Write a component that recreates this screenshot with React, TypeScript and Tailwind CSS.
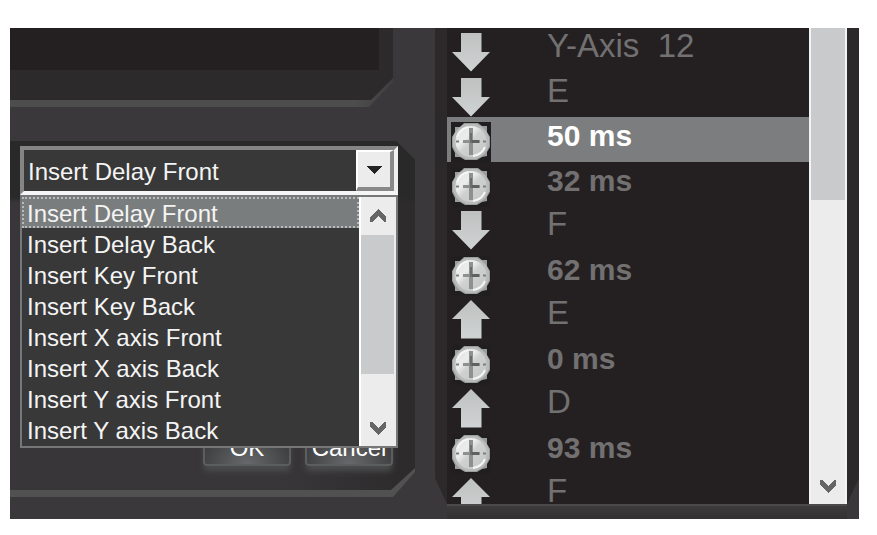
import React, { useState } from 'react';

/**
 * Macro editor panel
 *
 * Left: insert-mode combo box with its open option list, and the dialog buttons.
 * Right: recorded macro steps (key down / key up / delay) with a scrollbar.
 */

type StepKind = 'down' | 'up' | 'delay';

interface Step {
  kind: StepKind;
  label: string;
}

const INSERT_MODES = [
  'Insert Delay Front',
  'Insert Delay Back',
  'Insert Key Front',
  'Insert Key Back',
  'Insert X axis Front',
  'Insert X axis Back',
  'Insert Y axis Front',
  'Insert Y axis Back',
];

const STEPS: Step[] = [
  { kind: 'down', label: 'Y-Axis  12' },
  { kind: 'down', label: 'E' },
  { kind: 'delay', label: '50 ms' },
  { kind: 'delay', label: '32 ms' },
  { kind: 'down', label: 'F' },
  { kind: 'delay', label: '62 ms' },
  { kind: 'up', label: 'E' },
  { kind: 'delay', label: '0 ms' },
  { kind: 'up', label: 'D' },
  { kind: 'delay', label: '93 ms' },
  { kind: 'up', label: 'F' },
];

function ArrowIcon({ up = false }: { up?: boolean }) {
  return (
    <svg className="block h-10 w-10" viewBox="0 0 40 40" aria-hidden="true">
      <defs>
        <linearGradient id="arrowFill" x1="0" y1="0" x2="0" y2="1">
          <stop offset="0" stopColor="#bfc1c1" />
          <stop offset="1" stopColor="#d0d3d3" />
        </linearGradient>
      </defs>
      {up ? (
        <path d="M20 0 L39 19 H30.5 V38.500 H10 V19 H1 Z" fill="url(#arrowFill)" />
      ) : (
        <path d="M10 0 H30.5 V19 H39 L20 38.500 L1 19 H10 Z" fill="url(#arrowFill)" />
      )}
    </svg>
  );
}

function ClockIcon() {
  return (
    <svg className="block h-10 w-10 bg-[#211e1f]" viewBox="0 0 40 40" aria-hidden="true">
      <defs>
        <linearGradient id="clockFace" x1="0" y1="0" x2="1" y2="1">
          <stop offset="0" stopColor="#e2e4e4" />
          <stop offset="0.35" stopColor="#ececec" />
          <stop offset="0.5" stopColor="#cfd1d1" />
          <stop offset="1" stopColor="#c3c5c5" />
        </linearGradient>
      </defs>
      <path
        d="M13 1 H27 L31 4 H36 V10 L39 15 V25 L36 30 V34 L31 35 L26 38 H14 L9 35 H4 V31 L1 25 V15 L4 10 V5 H9 Z"
        fill="#9b9d9d"
      />
      <path d="M5 9 L9 5 L14 2 H26 L31 5 L35 9 L38 15 V24 L35 30 L31 34 L25 37 H15 L9 34 L5 30 L2 24 V15 Z" fill="#b9bbbb" />
      <circle cx="20" cy="19.500" r="15.500" fill="url(#clockFace)" />
      <path d="M6 15 A15 15 0 0 1 17 5 M34 25 A15 15 0 0 1 22 34" fill="none" stroke="#f6f6f6" strokeWidth="2" />
      <path d="M20 6 V33" stroke="#8e9090" strokeWidth="4" />
      <path d="M12 19.500 H29" stroke="#8e9090" strokeWidth="3" />
      <path d="M21 19.500 H28" stroke="#5f6161" strokeWidth="3" />
      <path d="M20 11 V21" stroke="#6b6d6d" strokeWidth="2" />
      <path d="M5 19.500 H8 M32 19.500 H35" stroke="#7e8080" strokeWidth="2" />
    </svg>
  );
}

function Chevron({ up = false }: { up?: boolean }) {
  return (
    <svg className="block h-4 w-4" viewBox="0 0 16 16" shapeRendering="crispEdges" aria-hidden="true">
      {up ? (
        <path d="M8 1 L16 9 V14 H14 L8 8 L2 14 H0 V9 Z" fill="#656565" />
      ) : (
        <path d="M0 2 H2 L8 8 L14 2 H16 V7 L8 15 L0 7 Z" fill="#656565" />
      )}
    </svg>
  );
}

function InsertModeCombo() {
  const [mode, setMode] = useState(INSERT_MODES[0]);

  return (
    <div className="relative text-2xl text-[#f4f4f4]">
      <div className="flex h-[49px] border-4 border-t-[#858585] border-r-[#f0f0f0] border-b-[#f5f5f5] border-l-[#858585] bg-[#383838]">
        <select
          aria-label="Insert mode"
          value={mode}
          onChange={(e) => setMode(e.target.value)}
          className="min-w-0 flex-1 appearance-none bg-transparent pt-[2px] pl-1 outline-none"
        >
          {INSERT_MODES.map((m) => (
            <option key={m}>{m}</option>
          ))}
        </select>
        <button
          type="button"
          aria-label="Close list"
          className="flex w-[38px] items-center justify-center border-t-2 border-r-4 border-b-4 border-l-2 border-t-[#ffffff] border-r-[#898989] border-b-[#898989] border-l-[#ffffff] bg-[#ececec]"
        >
          <svg className="h-2 w-4" viewBox="0 0 16 8" shapeRendering="crispEdges" aria-hidden="true">
            <path d="M0 0 H16 L8 8 Z" fill="#242223" />
          </svg>
        </button>
      </div>

      {/* Open option list */}
      <div className="absolute inset-x-0 top-full z-10 flex border-2 border-[#767778] bg-[#383838]">
        <ul role="listbox" aria-label="Insert modes" className="flex-1 pb-px">
          {INSERT_MODES.map((m) => (
            <li
              key={m}
              role="option"
              aria-selected={m === mode}
              onClick={() => setMode(m)}
              className={
                m === mode
                  ? 'h-[31px] border-2 border-dotted border-[#b9bbbb] bg-[#7a7d7e] pl-[3px] leading-[30px]'
                  : 'h-[31px] pl-[5px] leading-[34px]'
              }
            >
              {m}
            </li>
          ))}
        </ul>
        <div className="flex w-[37px] flex-col border-x-2 border-l-white border-r-[#ececec] bg-[#ececec]">
          <button type="button" aria-label="Scroll up" className="flex h-[38px] items-center justify-center">
            <Chevron up />
          </button>
          <div className="h-[139px] bg-[#c8cacb]" />
          <div className="flex-1" />
          <button type="button" aria-label="Scroll down" className="flex h-9 items-center justify-center">
            <Chevron />
          </button>
        </div>
      </div>
    </div>
  );
}

function DialogButton({ children }: { children: React.ReactNode }) {
  return (
    <button
      type="button"
      className="h-9 w-[88px] rounded-sm border-2 border-[#5b5d5e] bg-radial-[at_50%_100%] from-[#66696b] to-[#343334] text-2xl leading-8 text-white shadow-[0_6px_6px_-1px_#4d4e4f]"
    >
      {children}
    </button>
  );
}

function MacroSteps() {
  const [selected, setSelected] = useState(2);

  return (
    <div className="flex h-[476px] overflow-hidden bg-[#242021]">
      <ul role="listbox" aria-label="Macro steps" className="flex-1">
        {STEPS.map((step, i) => (
          <li
            key={i}
            role="option"
            aria-selected={i === selected}
            onClick={() => setSelected(i)}
            className={`flex pl-1 odd:h-[45px] even:h-11 ${
              i === selected ? 'bg-[#7b7d7e] text-white' : 'text-[#727071]'
            }`}
          >
            <div className="pt-[5px]">
              {step.kind === 'delay' ? <ClockIcon /> : <ArrowIcon up={step.kind === 'up'} />}
            </div>
            <span
              className={`h-8 pl-14 whitespace-pre ${
                step.kind === 'delay' ? 'text-[30px] leading-[38px] font-bold' : 'text-[33px] leading-9'
              }`}
            >
              {step.label}
            </span>
          </li>
        ))}
      </ul>
      <div className="flex w-[38px] flex-col border-x-2 border-[#f3f3f3] bg-[#ececec]">
        <div className="h-[172px] bg-[#c8cacb]" />
        <div className="flex-1" />
        <button type="button" aria-label="Scroll down" className="flex h-9 items-center justify-center">
          <Chevron />
        </button>
      </div>
    </div>
  );
}

export default function App() {
  return (
    <main className="min-h-screen bg-white pt-7 pr-[18px] pb-4 pl-[10px] font-['Liberation_Sans',Arial,sans-serif]">
      <div className="grid grid-cols-[425fr_424fr] bg-[#3a383a]">
        <section className="flex flex-col pb-[22px]">
          {/* Bottom corner of the preview well */}
          <div className="mr-[42px] h-[79px] bg-linear-to-r from-[#4e4d4e] from-90% to-[#403f40] [clip-path:polygon(0_0,100%_0,100%_54px,calc(100%-24px)_100%,0_100%)]">
            <div className="h-[72px] bg-[#2c2a2b] [clip-path:polygon(0_0,100%_0,100%_50px,calc(100%-22px)_100%,0_100%)]">
              <div className="mr-[14px] h-[42px] bg-[#242021]" />
            </div>
          </div>

          {/* Insert controls */}
          <div className="mt-[34px] flex-1 bg-[#525152] pb-[7px] [clip-path:polygon(0_0,calc(100%-38px)_0,calc(100%-20px)_18px,calc(100%-20px)_calc(100%-25px),calc(100%-42px)_100%,0_100%)]">
            <div className="flex h-full flex-col bg-[linear-gradient(180deg,#2a292a_0,#2a292a_56px,transparent_62px),linear-gradient(90deg,#383638_65%,#2d2b2c_92%)] [clip-path:polygon(0_0,calc(100%-38px)_0,calc(100%-20px)_18px,calc(100%-20px)_calc(100%-22px),calc(100%-44px)_100%,0_100%)]">
              <div className="pt-[5px] pr-[37px] pl-[10px]">
                <InsertModeCombo />
              </div>
              <div className="mt-auto mr-[42px] mb-6 flex justify-end gap-[14px]">
                <DialogButton>OK</DialogButton>
                <DialogButton>Cancel</DialogButton>
              </div>
            </div>
          </div>
        </section>

        <section>
          <div className="bg-[#2b292a] px-3 [clip-path:polygon(0_0,100%_0,100%_calc(100%-26px),calc(100%-12px)_100%,12px_100%,0_calc(100%-26px))]">
            <MacroSteps />
          </div>
          <div className="mx-3 h-[15px] border-t-2 border-[#4b494a] bg-linear-to-b from-[#3d3b3c] to-[#333132]" />
        </section>
      </div>
    </main>
  );
}
